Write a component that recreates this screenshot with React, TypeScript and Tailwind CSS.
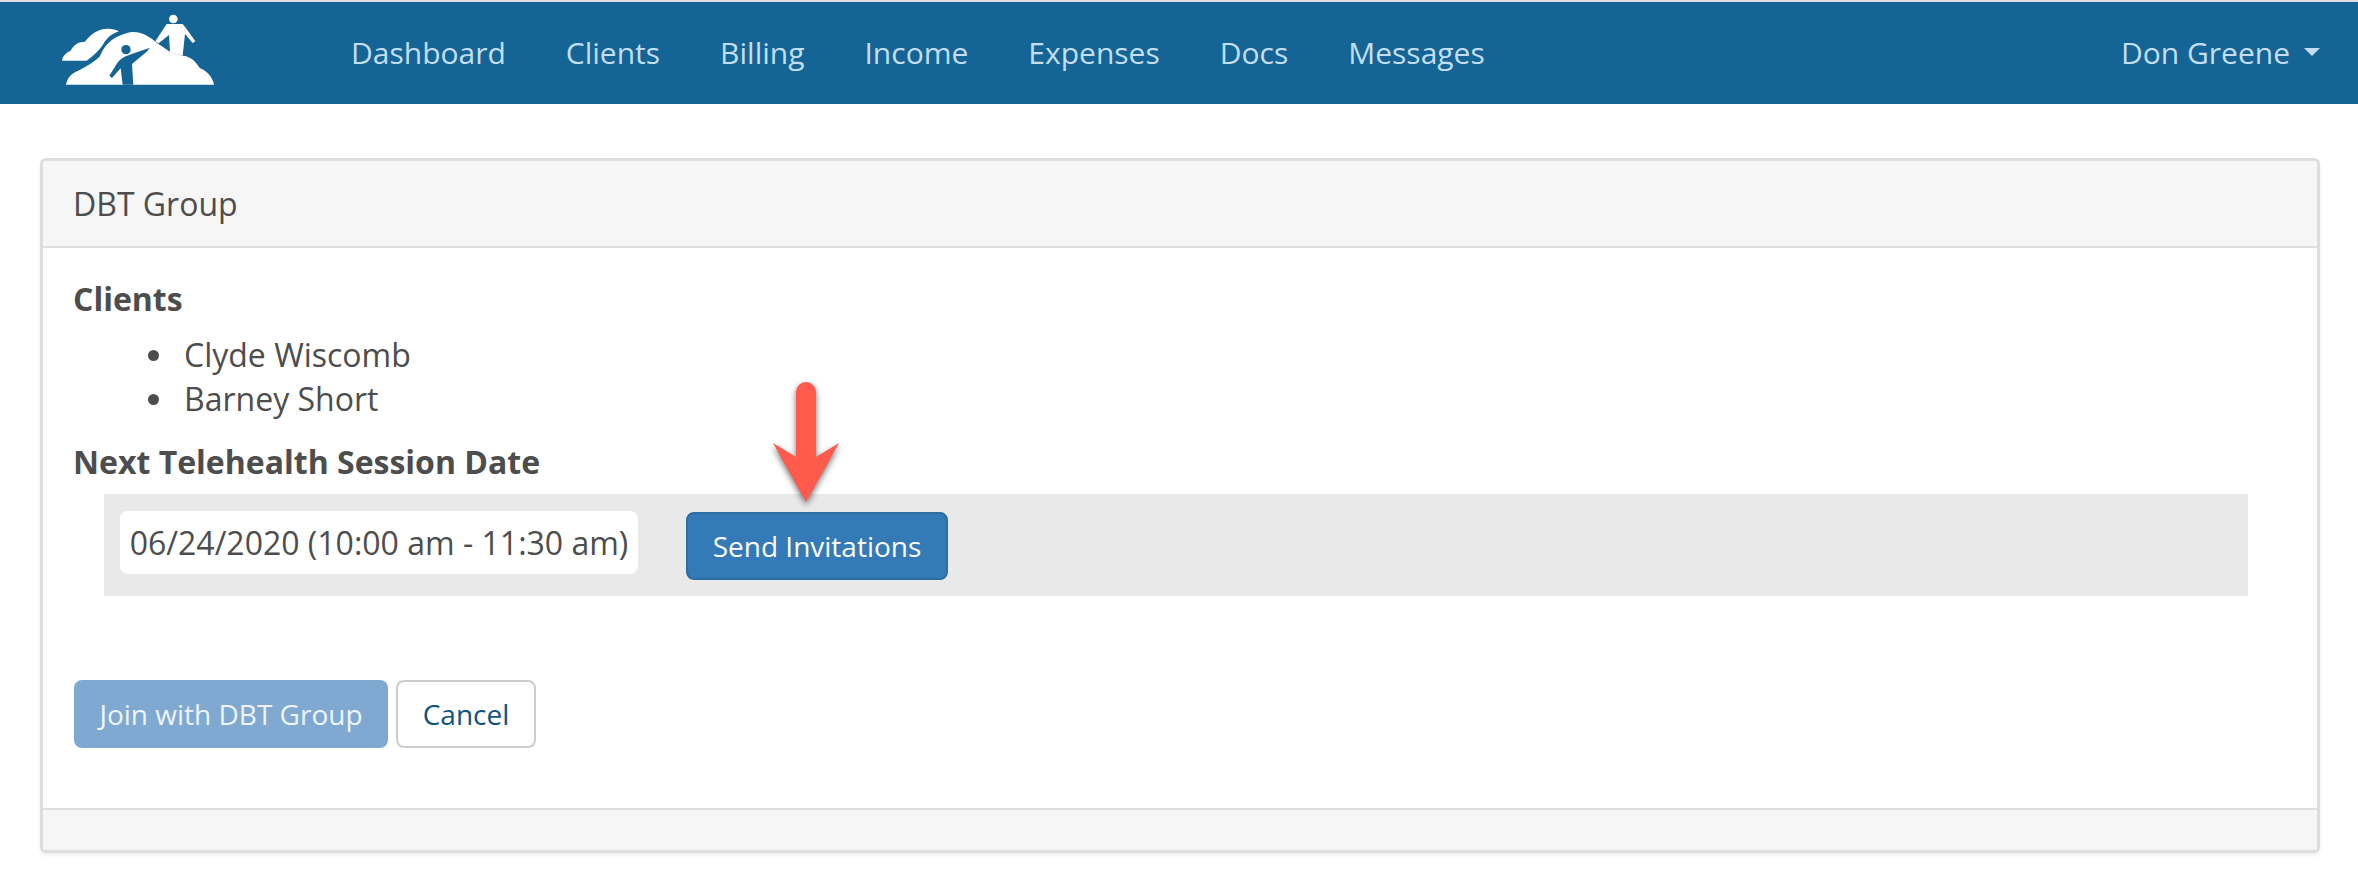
const navItems = ["Dashboard", "Clients", "Billing", "Income", "Expenses", "Docs", "Messages"]
const clients = ["Clyde Wiscomb", "Barney Short"]

function Logo() {
  return (
    <svg width="180" height="90" viewBox="0 0 540 270" className="shrink-0 mt-[4px]">
      {/* back cloud */}
      <path
        fill="#fff"
        d="M36 155 C38 140 50 130 62 125 C70 108 85 98 105 98 C115 85 135 62 165 60 C180 58 195 60 207 67 C185 74 170 88 160 105 C148 125 128 142 110 155 Z"
      />
      {/* mountain */}
      <path
        fill="#fff"
        d="M48 227 C52 205 65 192 85 185 C105 175 135 158 150 142 C160 120 175 85 240 70 C270 66 295 80 322 103 L362 130 L398 140 C420 140 440 160 450 178 C470 185 488 205 492 227 Z"
      />
      {/* lower climber, in the bar colour */}
      <circle cx="228" cy="122" r="14" fill="#156496" />
      <path
        fill="#156496"
        d="M300 116 L245 135 C225 142 208 150 200 165 L178 200 L186 207 L212 178 L218 227 L250 227 L246 165 L290 128 Z"
      />
      {/* upper climber */}
      <circle cx="370" cy="30" r="13" fill="#fff" />
      <path
        fill="#fff"
        d="M350 45 L398 45 C410 60 425 80 436 97 L428 102 L405 75 L398 140 L360 130 L357 78 L326 103 L316 97 Z"
      />
    </svg>
  )
}

export default function App() {
  return (
    <div className="min-h-[892px] bg-white border-t-2 border-[#e0e0e0] text-[#4d4d4d] font-['Open_Sans',sans-serif] text-[32px]">
      <nav className="h-[102px] bg-[#156496] flex items-center pl-[50px] pr-[38px] pb-[2px] text-[30px] text-[#c3def1]">
        <Logo />
        <ul className="flex items-center gap-[60px] ml-[121px]">
          {navItems.map((item) => (
            <li key={item}>{item}</li>
          ))}
        </ul>
        <div className="ml-auto flex items-center gap-[14px]">
          <span>Don Greene</span>
          <span className="w-0 h-0 border-x-[8px] border-t-[8px] border-x-transparent border-t-[#c3def1]" />
        </div>
      </nav>

      <div className="mt-[54px] mx-[40px] w-[2280px] h-[695px] border-[3px] border-[#ddd] rounded-[6px] shadow-[0_2px_4px_rgba(0,0,0,0.08)] flex flex-col overflow-hidden">
        <div className="h-[87px] bg-[#f6f6f6] border-b-2 border-[#ddd] flex items-center pl-[30px]">DBT Group</div>

        <div className="flex-1 pl-[30px] pt-[31px]">
          <h3 className="font-bold leading-[40px]">Clients</h3>
          <ul className="pl-[75px] mt-[14px]">
            {clients.map((name) => (
              <li key={name} className="flex items-center gap-[25px] leading-[44px]">
                <span className="w-[11px] h-[11px] rounded-full bg-[#4d4d4d]" />
                {name}
              </li>
            ))}
          </ul>
          <h3 className="font-bold leading-[40px] mt-[21px]">Next Telehealth Session Date</h3>

          <div className="relative mt-[12px] ml-[31px] w-[2144px] h-[102px] bg-[#e9e9e9] flex items-start pl-[16px] pt-[17px]">
            <div className="w-[518px] h-[63px] bg-white rounded-[8px] flex items-center justify-center whitespace-nowrap">
              06/24/2020 (10:00 am - 11:30 am)
            </div>
            <button className="ml-[48px] mt-[1px] w-[262px] h-[68px] bg-[#337ab7] border-2 border-[#2e6da4] rounded-[8px] text-white text-[28px]">
              Send Invitations
            </button>
            <svg
              width="84"
              height="122"
              viewBox="0 0 84 122"
              className="absolute left-[660px] top-[-112px] overflow-visible drop-shadow-[0_3px_3px_rgba(0,0,0,0.55)]"
            >
              <path fill="#ff5a4b" d="M32 10 a10 10 0 0 1 20 0 V75 L75 61 L42 120 L9 61 L32 75 Z" />
            </svg>
          </div>

          <div className="flex gap-[8px] mt-[84px] ml-[1px] text-[28px]">
            <button className="w-[314px] h-[68px] bg-[#7fa9d1] rounded-[8px] text-[#eef4fa]">Join with DBT Group</button>
            <button className="w-[140px] h-[68px] bg-white border-2 border-[#ccc] rounded-[8px] text-[#0f5283]">Cancel</button>
          </div>
        </div>

        <div className="h-[42px] bg-[#f6f6f6] border-t-2 border-[#ddd]" />
      </div>
    </div>
  )
}
